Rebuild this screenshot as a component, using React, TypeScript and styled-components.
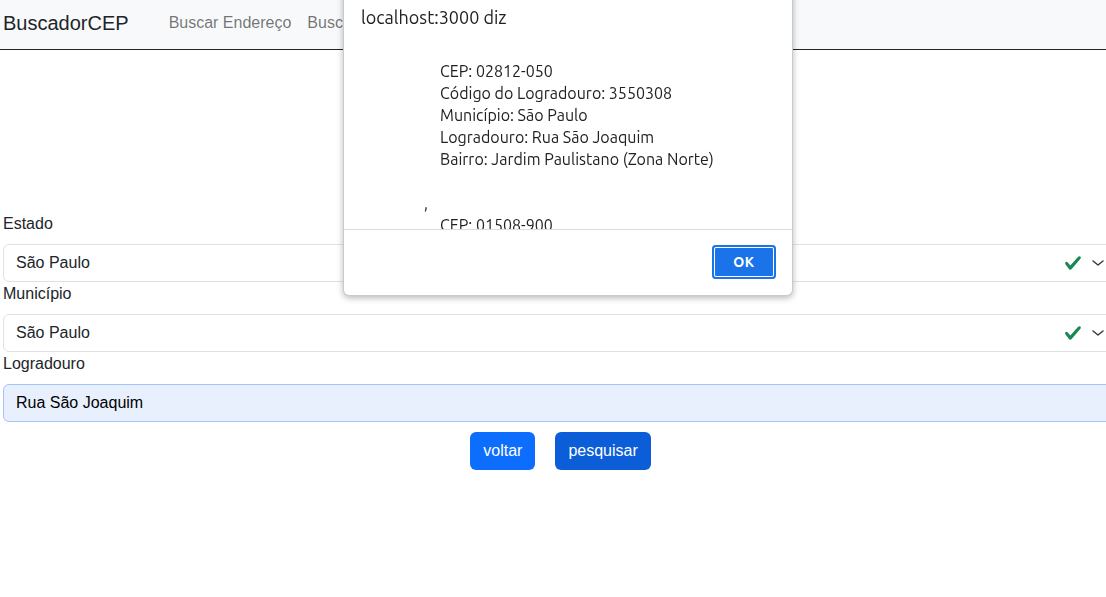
import React from "react";
import styled, { createGlobalStyle } from "styled-components";

const Global = createGlobalStyle`
  html, body { margin: 0; padding: 0; background: #fff; overflow: hidden; }
  body { font-family: "Liberation Sans", Arial, sans-serif; color: #212529; font-size: 16px; }
  * { box-sizing: border-box; }
`;

const Page = styled.div`
  width: 1118px;
  padding-left: 3px;
  min-height: 597px;
`;

const NavBar = styled.nav`
  height: 50px;
  background: #f8f9fa;
  display: flex;
  align-items: center;
  border-bottom: 1px solid #212529;
  margin-left: -3px;
  padding-left: 3px;
  padding-bottom: 1px;
`;

const Brand = styled.a`
  font-size: 20px;
  color: #212529;
  margin-right: 32px;
  line-height: 30px;
  padding-bottom: 2px;
`;

const NavLink = styled.a`
  font-size: 16px;
  color: rgba(0, 0, 0, 0.55);
  padding: 0 8px;
  line-height: 24px;
  padding-bottom: 2px;
`;

const Hero = styled.div`
  height: 162px;
`;

const Form = styled.form`
  display: flex;
  flex-direction: column;
`;

const Label = styled.label`
  display: block;
  line-height: 24px;
  height: 24px;
  margin-bottom: 8px;
`;

const Field = styled.div`
  height: 38px;
  border: 1px solid #dee2e6;
  border-radius: 6px;
  display: flex;
  align-items: center;
  padding: 0 12px;
  font-size: 16px;
  color: #212529;
`;

const SelectField = styled(Field)``;

const FieldText = styled.span`
  flex: 1;
`;

const IconSlot = styled.span`
  display: flex;
  align-items: center;
`;

const InputField = styled(Field)`
  background: #e8f0fe;
  border-color: #a3c4f9;
  color: #000;
`;

const Buttons = styled.div`
  display: flex;
  justify-content: center;
  gap: 20px;
  margin-top: 10px;
`;

const Btn = styled.button<{ $dark?: boolean }>`
  height: 38px;
  padding: 0 13px;
  border: none;
  border-radius: 6px;
  font-family: "Liberation Sans", Arial, sans-serif;
  font-size: 16px;
  color: #fff;
  background: ${(p) => (p.$dark ? "#0b5ed7" : "#0d6efd")};
`;

const Dialog = styled.div`
  position: fixed;
  left: 343px;
  top: -8px;
  width: 450px;
  height: 304px;
  background: #fff;
  border-radius: 0 0 6px 6px;
  border: 1px solid #c9cacc;
  border-top: none;
  box-shadow: 0 2px 6px rgba(0, 0, 0, 0.28);
  display: flex;
  flex-direction: column;
  font-family: "Ubuntu", "Noto Sans", sans-serif;
  color: #202124;
`;

const DialogTitle = styled.div`
  padding: 14px 17px 0;
  font-size: 18px;
  line-height: 22px;
`;

const DialogMessage = styled.div`
  margin-top: 10px;
  height: 191px;
  overflow: hidden;
  padding-left: 17px;
  font-size: 16px;
  line-height: 22px;
`;

const MsgLine = styled.div<{ $indent: number }>`
  height: 22px;
  padding-left: ${(p) => p.$indent}px;
  white-space: pre;
`;

const DialogFooter = styled.div`
  border-top: 1px solid #dadce0;
  flex: 1;
  display: flex;
  justify-content: flex-end;
  align-items: center;
  padding-right: 16px;
`;

const OkButton = styled.button`
  width: 64px;
  height: 34px;
  border: none;
  border-radius: 4px;
  background: #1a73e8;
  box-shadow: inset 0 0 0 2px #1a73e8, inset 0 0 0 3px #fff;
  color: #fff;
  font-family: "Ubuntu", "Noto Sans", sans-serif;
  font-weight: 700;
  font-size: 14px;
  letter-spacing: 0.5px;
  margin-bottom: 1px;
`;

const Check = () => (
  <svg width="18" height="18" viewBox="0 0 8 8" style={{ marginRight: 8 }}>
    <path fill="#198754" d="M2.3 6.73.6 4.53c-.4-1.04.46-1.4 1.1-.8l1.1 1.4 3.4-3.8c.6-.63 1.6-.27 1.2.7l-4 4.6c-.43.5-.8.4-1.1.1z" />
  </svg>
);

const Chevron = () => (
  <svg width="16" height="16" viewBox="0 0 16 16" style={{ marginRight: -1 }}>
    <path fill="none" stroke="#343a40" strokeLinecap="round" strokeLinejoin="round" strokeWidth="1.5" d="m3 6 5 4 5-4" />
  </svg>
);

const lines: { t: string; i: number }[] = [
  { t: "", i: 0 },
  { t: "CEP: 02812-050", i: 79 },
  { t: "Código do Logradouro: 3550308", i: 79 },
  { t: "Município: São Paulo", i: 79 },
  { t: "Logradouro: Rua São Joaquim", i: 79 },
  { t: "Bairro: Jardim Paulistano (Zona Norte)", i: 79 },
  { t: "", i: 0 },
  { t: ",", i: 63 },
  { t: "CEP: 01508-900", i: 79 },
  { t: "Código do Logradouro: 3550308", i: 79 },
];

export default function App() {
  return (
    <>
      <Global />
      <Page>
        <NavBar>
          <Brand>BuscadorCEP</Brand>
          <NavLink>Buscar Endereço</NavLink>
          <NavLink>Buscar CEP</NavLink>
        </NavBar>
        <Hero />
        <Form>
          <Label>Estado</Label>
          <SelectField>
            <FieldText>São Paulo</FieldText>
            <IconSlot>
              <Check />
              <Chevron />
            </IconSlot>
          </SelectField>
          <Label>Município</Label>
          <SelectField>
            <FieldText>São Paulo</FieldText>
            <IconSlot>
              <Check />
              <Chevron />
            </IconSlot>
          </SelectField>
          <Label>Logradouro</Label>
          <InputField>
            <FieldText>Rua São Joaquim</FieldText>
          </InputField>
          <Buttons>
            <Btn type="button">voltar</Btn>
            <Btn type="button" $dark>pesquisar</Btn>
          </Buttons>
        </Form>
      </Page>
      <Dialog>
        <DialogTitle>localhost:3000 diz</DialogTitle>
        <DialogMessage>
          {lines.map((l, k) => (
            <MsgLine key={k} $indent={l.i}>{l.t}</MsgLine>
          ))}
        </DialogMessage>
        <DialogFooter>
          <OkButton>OK</OkButton>
        </DialogFooter>
      </Dialog>
    </>
  );
}
